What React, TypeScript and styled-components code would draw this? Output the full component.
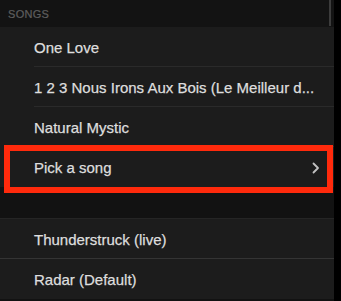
import React from "react";
import styled, { createGlobalStyle } from "styled-components";

const Global = createGlobalStyle`
  html, body { margin: 0; padding: 0; background: #000; }
  body { font-family: "Liberation Sans", Arial, sans-serif; }
`;

const Page = styled.div`
  display: flex;
  width: 341px;
  height: 301px;
  overflow: hidden;
  background: #000;
`;

const Content = styled.div`
  flex: 1;
  display: flex;
  flex-direction: column;
  background: #121212;
`;

const Strip = styled.div`
  width: 7px;
  background: #000;
`;

const SectionHeader = styled.div`
  position: relative;
  height: 27px;
  display: flex;
  align-items: center;
  padding-left: 8px;
  box-sizing: border-box;
  font-size: 11px;
  letter-spacing: 0.3px;
  color: #5e5e5e;
  -webkit-text-stroke: 0.2px #5e5e5e;
  text-transform: uppercase;
  background: #131313;
`;

const ScrollIndicator = styled.div`
  position: absolute;
  right: 3px;
  top: 0;
  width: 2px;
  height: 26px;
  background: #3c3c3c;
`;

const Group = styled.div<{ $topLine?: boolean }>`
  display: flex;
  flex-direction: column;
  background: #1c1c1c;
  border-top: ${(p) => (p.$topLine ? "1px solid #252525" : "none")};
`;

const Row = styled.div<{ $full?: boolean; $last?: boolean }>`
  position: relative;
  height: 40px;
  display: flex;
  align-items: center;
  padding-left: 34px;
  padding-right: 14px;
  box-sizing: border-box;
  font-size: 15px;
  color: #dedede;
  -webkit-text-stroke: 0.25px #dedede;
  white-space: nowrap;

  &::after {
    content: "";
    display: ${(p) => (p.$last ? "none" : "block")};
    position: absolute;
    left: ${(p) => (p.$full ? "0" : "34px")};
    right: 0;
    bottom: 0;
    height: 1px;
    background: ${(p) => (p.$full ? "#343434" : "#2a2a2a")};
  }
`;

const Label = styled.span`
  flex: 1;
`;

const Chevron = styled.svg`
  width: 8px;
  height: 12px;
  margin-top: 1px;
`;

const Highlight = styled.div`
  position: absolute;
  left: 4px;
  right: 1px;
  top: -2px;
  bottom: -6px;
  border: 6px solid #ff2a0c;
  pointer-events: none;
`;

const Spacer = styled.div`
  height: 31px;
  background: #121212;
`;

export default function App() {
  return (
    <>
      <Global />
      <Page>
        <Content>
          <SectionHeader>
            Songs
            <ScrollIndicator />
          </SectionHeader>
          <Group>
            <Row>
              <Label>One Love</Label>
            </Row>
            <Row>
              <Label>1 2 3 Nous Irons Aux Bois (Le Meilleur d...</Label>
            </Row>
            <Row>
              <Label>Natural Mystic</Label>
            </Row>
            <Row $last>
              <Label>Pick a song</Label>
              <Chevron viewBox="0 0 8 12">
                <path d="M1.5 1.5 L6 6 L1.5 10.5" fill="none" stroke="#c2c2c2" strokeWidth="1.8" strokeLinecap="round" strokeLinejoin="round" />
              </Chevron>
              <Highlight />
            </Row>
          </Group>
          <Spacer />
          <Group $topLine>
            <Row $full>
              <Label>Thunderstruck (live)</Label>
            </Row>
            <Row $last>
              <Label>Radar (Default)</Label>
            </Row>
          </Group>
        </Content>
        <Strip />
      </Page>
    </>
  );
}
